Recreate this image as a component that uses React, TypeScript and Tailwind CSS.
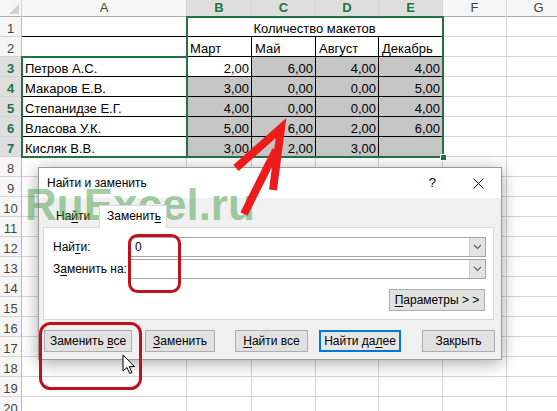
import React from 'react';

const colW = ['w-[165px]', 'w-[65px]', 'w-[64px]', 'w-[63px]', 'w-[64px]', 'w-[64px]', 'w-[64px]'];
const letters = ['A', 'B', 'C', 'D', 'E', 'F', 'G'];

type Cell = { t?: string; right?: boolean; gray?: boolean };

const body: Record<number, Cell[]> = {
  2: [{}, { t: 'Март' }, { t: 'Май' }, { t: 'Август' }, { t: 'Декабрь' }, {}, {}],
  3: [{ t: 'Петров А.С.' }, { t: '2,00', right: true }, { t: '6,00', right: true, gray: true }, { t: '4,00', right: true, gray: true }, { t: '4,00', right: true, gray: true }, {}, {}],
  4: [{ t: 'Макаров Е.В.' }, { t: '3,00', right: true, gray: true }, { t: '0,00', right: true, gray: true }, { t: '0,00', right: true, gray: true }, { t: '5,00', right: true, gray: true }, {}, {}],
  5: [{ t: 'Степанидзе Е.Г.' }, { t: '4,00', right: true, gray: true }, { t: '0,00', right: true, gray: true }, { t: '0,00', right: true, gray: true }, { t: '4,00', right: true, gray: true }, {}, {}],
  6: [{ t: 'Власова У.К.' }, { t: '5,00', right: true, gray: true }, { t: '6,00', right: true, gray: true }, { t: '2,00', right: true, gray: true }, { t: '6,00', right: true, gray: true }, {}, {}],
  7: [{ t: 'Кисляк В.В.' }, { t: '3,00', right: true, gray: true }, { t: '2,00', right: true, gray: true }, { t: '3,00', right: true, gray: true }, { gray: true }, {}, {}],
};

function SheetCell({ w, c, black }: { w: string; c: Cell; black: boolean }) {
  return (
    <div
      className={`${w} h-[20px] shrink-0 border-r border-b ${black ? 'border-black' : 'border-[#d4d4d4]'} ${c.gray ? 'bg-[#c6c6c6]' : 'bg-white'} ${c.right ? 'text-right pr-[2px]' : 'text-left pl-[3px]'} pt-[4px] leading-[15px] whitespace-nowrap overflow-visible`}
    >
      {c.t}
    </div>
  );
}

function RowNum({ n }: { n: number }) {
  const sel = n >= 3 && n <= 7;
  return (
    <div
      className={`w-[22px] h-[20px] shrink-0 border-r border-b border-r-[#bdbdbd] border-b-[#d4d4d4] text-center pt-[4px] leading-[15px] ${sel ? 'bg-[#dedede] text-[#217346] font-bold' : 'bg-[#f6f6f6] text-[#444]'}`}
    >
      {n}
    </div>
  );
}

function Sheet() {
  const rows = Array.from({ length: 20 }, (_, i) => i + 1);
  return (
    <div className="flex flex-col font-['Liberation_Sans',sans-serif] text-[13px] text-black">
      <div className="flex h-[17px]">
        <div className="w-[22px] h-[17px] shrink-0 bg-[#f6f6f6] border-r border-b border-r-[#d4d4d4] border-b-[#ababab] flex items-end justify-end p-[2px]">
          <svg width="10" height="10" viewBox="0 0 10 10">
            <polygon points="10,0 10,10 0,10" fill="#d0d0d0" />
          </svg>
        </div>
        {letters.map((l, i) => {
          const sel = i >= 1 && i <= 4;
          return (
            <div
              key={l}
              className={`${colW[i]} h-[17px] shrink-0 border-r border-b border-r-[#d4d4d4] border-b-[#ababab] text-center leading-[15px] ${sel ? 'bg-[#dedede] text-[#217346] font-bold' : 'bg-[#f6f6f6] text-[#444]'}`}
            >
              {l}
            </div>
          );
        })}
      </div>
      {rows.map((r) => (
        <div key={r} className="flex h-[20px]">
          <RowNum n={r} />
          {r === 1 ? (
            <>
              <SheetCell w={colW[0]} c={{}} black />
              <div className="w-[256px] h-[20px] shrink-0 border-r border-b border-black bg-white text-center pt-[4px] leading-[15px]">
                Количество макетов
              </div>
              <SheetCell w={colW[5]} c={{}} black={false} />
              <SheetCell w={colW[6]} c={{}} black={false} />
            </>
          ) : (
            (body[r] ?? [{}, {}, {}, {}, {}, {}, {}]).map((c, i) => (
              <SheetCell key={i} w={colW[i]} c={c} black={r <= 7 && i <= 4} />
            ))
          )}
        </div>
      ))}
    </div>
  );
}

function Btn({ w, children, def }: { w: string; children: React.ReactNode; def?: boolean }) {
  return (
    <div
      className={`${w} h-[22px] shrink-0 flex items-center justify-center ${def ? 'border-2 border-[#0078d7] bg-[#e5e5e5]' : 'border border-[#adadad] bg-[#e1e1e1]'}`}
    >
      {children}
    </div>
  );
}

function U({ children }: { children: React.ReactNode }) {
  return <span className="underline underline-offset-[2px] decoration-1">{children}</span>;
}

function Combo({ value }: { value?: string }) {
  return (
    <div className="flex-1 h-[20px] border border-[#a6a6a6] bg-white flex">
      <div className="flex-1 pl-[4px] leading-[18px]">{value}</div>
      <div className="w-[16px] h-full bg-[#e3e3e3] border-l border-[#cfcfcf] flex items-center justify-center">
        <svg width="9" height="6" viewBox="0 0 9 6">
          <polyline points="1,1 4.5,4.5 8,1" fill="none" stroke="#606060" strokeWidth="1.2" />
        </svg>
      </div>
    </div>
  );
}

function Dialog() {
  return (
    <div className="absolute left-[38px] top-[167px] w-[464px] h-[193px] bg-[#f0f0f0] border border-[#9a9a9a] shadow-[0_3px_16px_rgba(0,0,0,0.35)] flex flex-col font-['Liberation_Sans',sans-serif] text-[12px] text-black">
      <div className="h-[30px] bg-white flex items-center pl-[8px] pr-[17px]">
        <span>Найти и заменить</span>
        <span className="ml-auto text-[13px]">?</span>
        <svg className="ml-[37px]" width="11" height="11" viewBox="0 0 11 11">
          <line x1="0.5" y1="0.5" x2="10.5" y2="10.5" stroke="#111" strokeWidth="1" />
          <line x1="10.5" y1="0.5" x2="0.5" y2="10.5" stroke="#111" strokeWidth="1" />
        </svg>
      </div>
      <div className="h-[29px] flex items-end pl-[4px]">
        <div className="w-[56px] h-[20px] pl-[13px] leading-[19px]">
          На<U>й</U>ти
        </div>
        <div className="relative z-10 -mb-px w-[68px] h-[23px] bg-white border border-b-0 border-[#d9d9d9] pl-[7px] leading-[21px]">
          Заменит<U>ь</U>
        </div>
      </div>
      <div className="ml-[4px] w-[451px] h-[93px] bg-white border border-[#d9d9d9] pt-[9px] pl-[9px] pr-[7px] flex flex-col">
        <div className="flex items-center h-[20px]">
          <div className="w-[77px]">
            Най<U>т</U>и:
          </div>
          <Combo value="0" />
        </div>
        <div className="flex items-center h-[20px] mt-[2px]">
          <div className="w-[77px]">
            З<U>а</U>менить на:
          </div>
          <Combo />
        </div>
        <div className="flex justify-end mt-[10px] pr-[1px]">
          <Btn w="w-[96px]">
            <span>
              <U>П</U>араметры &gt; &gt;
            </span>
          </Btn>
        </div>
      </div>
      <div className="flex mt-[10px] pl-[5px]">
        <Btn w="w-[88px]">
          <span>
            Заменить <U>в</U>се
          </span>
        </Btn>
        <div className="ml-[13px]">
          <Btn w="w-[70px]">
            <span>
              <U>З</U>аменить
            </span>
          </Btn>
        </div>
        <div className="ml-[20px]">
          <Btn w="w-[73px]">
            <span>
              <U>Н</U>айти все
            </span>
          </Btn>
        </div>
        <div className="ml-[11px]">
          <Btn w="w-[82px]" def>
            <span>
              Найти да<U>л</U>ее
            </span>
          </Btn>
        </div>
        <div className="ml-[21px]">
          <Btn w="w-[73px]">
            <span>Закрыть</span>
          </Btn>
        </div>
      </div>
    </div>
  );
}

export default function App() {
  return (
    <div className="relative w-[557px] h-[411px] overflow-hidden bg-white">
      <Sheet />
      {/* selection outlines */}
      <div className="absolute left-[21px] top-[56px] w-[167px] h-[102px] border-2 border-[#217346]" />
      <div className="absolute left-[186px] top-[16px] w-[258px] h-[142px] border-2 border-[#217346]" />
      <div className="absolute left-[440px] top-[154px] w-[7px] h-[7px] bg-[#217346] border border-white" />
      <Dialog />
      <div className="absolute left-[25px] top-[183px] text-[44px] leading-[44px] font-bold font-['Liberation_Sans',sans-serif] text-[rgba(74,158,74,0.5)] whitespace-nowrap">
        RuExcel.ru
      </div>
      <svg className="absolute left-0 top-0 pointer-events-none" width="557" height="411" viewBox="0 0 557 411">
        <rect x="129.5" y="235.5" width="50" height="56" rx="8" fill="none" stroke="#c0121e" strokeWidth="3" />
        <rect x="40.5" y="323.5" width="100" height="65" rx="10" fill="none" stroke="#c0121e" strokeWidth="3" />
        <g stroke="#ec1c1c" strokeWidth="8" strokeLinecap="butt" strokeLinejoin="miter" fill="none">
          <polyline points="236,168 281,128 273,190" />
          <line x1="276" y1="150" x2="244" y2="214" />
        </g>
        <polygon
          points="123,355 123,371 127,367.5 129.8,373.5 132,372.5 129.3,366.6 134.5,366.6"
          fill="#fff"
          stroke="#000"
          strokeWidth="1"
          strokeLinejoin="round"
        />
      </svg>
    </div>
  );
}
